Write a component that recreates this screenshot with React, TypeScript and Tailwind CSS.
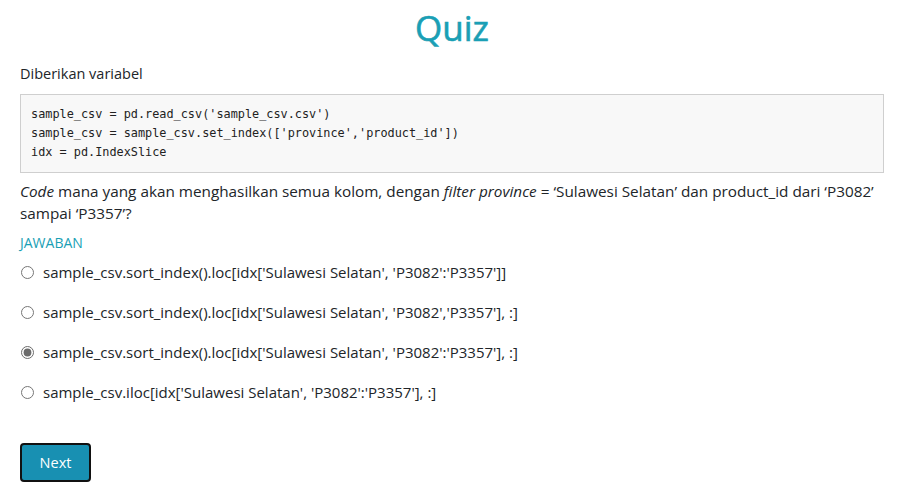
import { FC } from "react";

const options = [
  "sample_csv.sort_index().loc[idx['Sulawesi Selatan', 'P3082':'P3357']]",
  "sample_csv.sort_index().loc[idx['Sulawesi Selatan', 'P3082','P3357'], :]",
  "sample_csv.sort_index().loc[idx['Sulawesi Selatan', 'P3082':'P3357'], :]",
  "sample_csv.iloc[idx['Sulawesi Selatan', 'P3082':'P3357'], :]",
];

const App: FC = () => {
  return (
    <div className="w-full min-h-screen bg-white px-5 font-['Open_Sans',sans-serif] text-[#212529]">
      <h1 className="text-center text-[35px] leading-[56px] font-normal [-webkit-text-stroke:0.6px_#1a9fb5] text-[#1a9fb5]">
        Quiz
      </h1>
      <p className="text-[14.5px] leading-[20px] mt-[8px]">Diberikan variabel</p>
      <pre className="mt-[10px] border border-[#cfcfcf] bg-[#f8f8f8] px-[10px] py-[10px] text-[11.85px] leading-[19px] font-['DejaVu_Sans_Mono',monospace] text-[#222]">
        {`sample_csv = pd.read_csv('sample_csv.csv')
sample_csv = sample_csv.set_index(['province','product_id'])
idx = pd.IndexSlice`}
      </pre>
      <p className="mt-[7px] text-[15.3px] leading-[22px]">
        <i>Code</i> mana yang akan menghasilkan semua kolom, dengan{" "}
        <i>filter province</i> = ‘Sulawesi Selatan’ dan product_id dari
        ‘P3082’ sampai ‘P3357’?
      </p>
      <p className="mt-[9px] text-[14px] leading-[20px] text-[#1a9fb5]">JAWABAN</p>
      <div className="mt-[-1px] flex flex-col">
        {options.map((opt, i) => (
          <label key={i} className="flex items-center h-[40px] text-[15px]">
            <input
              type="radio"
              name="answer"
              defaultChecked={i === 2}
              className="w-[13px] h-[13px] ml-[1px] mr-[9px] accent-[#6b6b6b]"
            />
            {opt}
          </label>
        ))}
      </div>
      <button className="mt-[31px] w-[71px] h-[39px] rounded-[4px] border-2 border-[#111] bg-[#1890b2] text-white text-[14.5px]">
        Next
      </button>
    </div>
  );
};

export default App;
